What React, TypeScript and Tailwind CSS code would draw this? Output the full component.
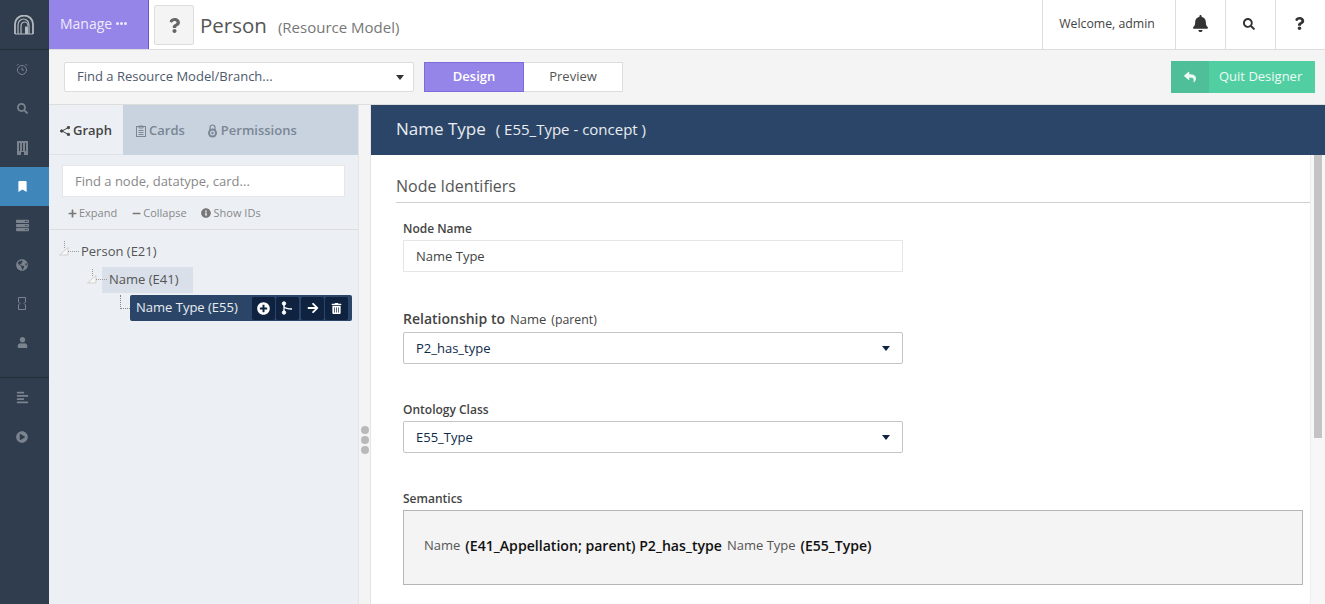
import {
  FaAlignLeft,
  FaArrowRight,
  FaBell,
  FaBookmark,
  FaGlobeAmericas,
  FaInfoCircle,
  FaMinus,
  FaPlayCircle,
  FaPlus,
  FaPlusCircle,
  FaQuestion,
  FaReply,
  FaSearch,
  FaServer,
  FaTrashAlt,
  FaUser,
} from "react-icons/fa";

function Logo() {
  return (
    <svg width="20" height="20" viewBox="0 0 20 20" fill="none" stroke="#b5b9be" strokeWidth="1.5">
      <path d="M1 19V9a9 8.500 0 0 1 18 0v10" strokeWidth="1.800" />
      <path d="M4 19V10a5.500 6 0 0 1 11 0v9" strokeWidth="1.200" />
      <path d="M7 19v-8a3.500 4 0 0 1 7 0" strokeWidth="1.200" />
      <path d="M1 19h18" strokeWidth="1" />
      <path d="M11 19v-7.500h3V19" fill="#b5b9be" stroke="none" />
    </svg>
  );
}

function ClockIcon() {
  return (
    <svg width="12" height="13" viewBox="0 0 12 13" fill="none" stroke="#7b838d" strokeWidth="1">
      <circle cx="6" cy="7" r="4.500" />
      <path d="M6 4.500V7h2M1 2.500 2.500 1M11 2.500 9.500 1" />
    </svg>
  );
}

function BuildingIcon() {
  return (
    <svg width="11" height="14" viewBox="0 0 11 14">
      <rect width="11" height="14" fill="#7b838d" />
      <path d="M2 2h1v8H2zM5 2h1v8H5zM8 2h1v8H8zM4 11h3v3H4z" fill="#2f3d4f" />
    </svg>
  );
}

function TicketIcon() {
  return (
    <svg width="8" height="13" viewBox="0 0 8 13" fill="none" stroke="#7b838d" strokeWidth="1">
      <path d="M.5.500h7V5L6 6.500 7.500 8v4.500h-7V8L2 6.500.5 5z" />
    </svg>
  );
}

function BranchIcon() {
  return (
    <svg width="13" height="14" viewBox="0 0 13 14" fill="none" stroke="white">
      <circle cx="3" cy="2.500" r="1.700" fill="white" />
      <circle cx="3" cy="11.500" r="1.700" fill="white" />
      <path d="M3 3v8M3 5.500c1 2 4 2.500 8 2.500" strokeWidth="1.300" />
    </svg>
  );
}

function ClipboardIcon() {
  return (
    <svg width="10" height="12" viewBox="0 0 10 12" fill="none" stroke="#7a8694" strokeWidth="1">
      <rect x=".5" y="1.500" width="9" height="10" />
      <path d="M3 1h4v2H3zM2.500 5.500h5M2.500 7.500h5M2.500 9.500h5" />
    </svg>
  );
}

function LockIcon() {
  return (
    <svg width="11" height="14" viewBox="0 0 11 14" fill="none" stroke="#7a8694">
      <path d="M3 6V3.500a2.500 2.500 0 0 1 5 0V6" strokeWidth="1.200" />
      <circle cx="5.500" cy="9" r="4.500" fill="#7a8694" stroke="none" />
      <circle cx="5.500" cy="9" r="2.500" fill="#c8d3df" stroke="none" />
      <circle cx="5.500" cy="9" r="1.200" fill="#7a8694" stroke="none" />
    </svg>
  );
}

function ShareIcon() {
  return (
    <svg width="10" height="10" viewBox="0 0 10 10" fill="none" stroke="#444" strokeWidth="1">
      <path d="M8.500 1.500 2 5l6.500 3.500" />
      <circle cx="8.500" cy="1.500" r="1.200" fill="#444" />
      <circle cx="1.700" cy="5" r="1.200" fill="#444" />
      <circle cx="8.500" cy="8.500" r="1.200" fill="#444" />
    </svg>
  );
}

function Caret() {
  return <span className="w-0 h-0 border-x-[4px] border-x-transparent border-t-[5px] border-t-[#0f2240]" />;
}

function TreeToggle() {
  return (
    <svg width="22" height="22" viewBox="0 0 22 22" className="shrink-0 relative z-10">
      <path d="M6.500 0v7" stroke="#9a9a9a" strokeDasharray="1 1" fill="none" />
      <path d="M1.500 14 10 6.500V14z" fill="#f7f7f7" stroke="#cfcfcf" strokeWidth="1" />
      <path d="M10 10.500h12" stroke="#9a9a9a" strokeDasharray="1 1" fill="none" />
    </svg>
  );
}

function NavItem({ children, active }: { children: React.ReactNode; active?: boolean }) {
  return (
    <div className={`h-[39px] pr-[5px] flex items-center justify-center ${active ? "bg-[#3f86bb] text-white" : "text-[#7b838d]"}`}>
      {children}
    </div>
  );
}

function SelectBox({ value }: { value: string }) {
  return (
    <div className="w-[500px] h-[32px] bg-white border border-[#c4c4c4] rounded-[2px] flex items-center justify-between pl-3 pr-[12px] text-[13px] text-[#0f2a4a]">
      <span className="pt-[1px]">{value}</span>
      <Caret />
    </div>
  );
}

function ActionButton({ children, className = "" }: { children: React.ReactNode; className?: string }) {
  return <div className={`w-[23px] h-[23px] rounded-[2px] bg-[#0f2240] flex items-center justify-center text-white ${className}`}>{children}</div>;
}

export default function App() {
  return (
    <div className="flex w-[1325px] h-[604px] overflow-hidden bg-[#f4f4f4] text-[#444] font-['Open_Sans',sans-serif]">
      <aside className="w-[49px] shrink-0 bg-[#2f3d4f] flex flex-col">
        <div className="h-[50px] shrink-0 pr-[1px] flex items-center justify-center border-b border-[#222d3a]">
          <Logo />
        </div>
        <div className="flex flex-col">
          <NavItem><ClockIcon /></NavItem>
          <NavItem><FaSearch size={11} /></NavItem>
          <NavItem><BuildingIcon /></NavItem>
          <NavItem active><FaBookmark size={11} /></NavItem>
          <NavItem><FaServer size={13} /></NavItem>
          <NavItem><FaGlobeAmericas size={12} /></NavItem>
          <NavItem><TicketIcon /></NavItem>
          <NavItem><FaUser size={11} /></NavItem>
        </div>
        <div className="mt-[15px] border-t border-[#222d3a] flex flex-col">
          <NavItem><FaAlignLeft size={13} /></NavItem>
          <NavItem><FaPlayCircle size={12} /></NavItem>
        </div>
      </aside>

      <div className="flex-1 min-w-0 flex flex-col">
        <header className="h-[50px] shrink-0 bg-white border-b border-[#ddd] flex items-stretch">
          <div className="w-[100px] bg-[#9685e8] border-r border-[#6a55cf] flex items-center pl-[11px] pb-[2px] text-[14px] text-[#eeeafc] gap-[4px]">
            Manage
            <span className="flex gap-[1px]">
              <span className="w-[3px] h-[3px] rounded-full bg-[#eeeafc]" />
              <span className="w-[3px] h-[3px] rounded-full bg-[#eeeafc]" />
              <span className="w-[3px] h-[3px] rounded-full bg-[#eeeafc]" />
            </span>
          </div>
          <div className="w-[40px] h-[40px] ml-[5px] my-[5px] bg-[#f4f4f4] border border-[#ddd] rounded-[2px] flex items-center justify-center text-[#666]">
            <FaQuestion size={15} />
          </div>
          <div className="ml-[6px] pt-[2px] flex items-center text-[20.500px] text-[#555]">
            Person
            <span className="ml-[11px] mt-[3px] text-[15px] text-[#777]">(Resource Model)</span>
          </div>
          <div className="ml-auto flex items-stretch">
            <div className="w-[133px] pr-[4px] border-l border-[#ddd] flex items-center justify-center text-[12.300px] text-[#444]">Welcome, admin</div>
            <div className="w-[50px] pb-[2px] border-l border-[#ddd] flex items-center justify-center text-[#333]"><FaBell size={17} /></div>
            <div className="w-[50px] pr-[4px] pb-[2px] border-l border-[#ddd] flex items-center justify-center text-[#333]"><FaSearch size={12} /></div>
            <div className="w-[50px] pr-[3px] pb-[2px] border-l border-[#ddd] flex items-center justify-center text-[#333]"><FaQuestion size={13} /></div>
          </div>
        </header>

        <div className="h-[55px] shrink-0 flex items-center pl-[15px] pr-[10px] border-b border-[#ddd]">
          <div className="w-[350px] h-[30px] bg-white border border-[#ddd] rounded-[2px] flex items-center justify-between pl-3 pr-[9px] text-[13px] text-[#4d5a6d]">
            <span>Find a Resource Model/Branch...</span>
            <span className="w-0 h-0 border-x-[4px] border-x-transparent border-t-[5px] border-t-[#333]" />
          </div>
          <div className="ml-[10px] w-[100px] h-[30px] bg-[#9685e8] border border-[#7e6bdc] flex items-center justify-center text-[13px] font-semibold text-white">Design</div>
          <div className="w-[99px] h-[30px] bg-white border border-l-0 border-[#ddd] flex items-center justify-center text-[13px] text-[#555]">Preview</div>
          <div className="ml-auto h-[32px] w-[144px] bg-[#52cea3] flex items-stretch text-[13px] text-white/90">
            <div className="w-[38px] bg-[#4ebf98] flex items-center justify-center"><FaReply size={12} /></div>
            <div className="flex-1 flex items-center pl-[10px]">Quit Designer</div>
          </div>
        </div>

        <div className="flex-1 min-h-0 flex">
          <div className="w-[309px] shrink-0 bg-[#ecf0f5] flex flex-col">
            <div className="h-[50px] pt-[1px] flex bg-[#c8d3df] text-[13px] font-semibold text-[#7a8694]">
              <div className="w-[74px] -mt-[1px] pt-[2px] bg-[#ecf0f5] border-b border-[#dde2e8] flex items-center justify-center gap-[3px] text-[#444]">
                <ShareIcon />Graph
              </div>
              <div className="ml-[13px] flex items-center gap-[3px]"><ClipboardIcon />Cards</div>
              <div className="ml-[22px] flex items-center gap-[3px]"><LockIcon />Permissions</div>
            </div>
            <div className="h-[75px] border-b border-[#ddd] px-[13px] pt-[10px]">
              <div className="w-[283px] h-[32px] pt-[1px] bg-white border border-[#e6e6e6] flex items-center pl-3 text-[13px] text-[#888]">
                Find a node, datatype, card...
              </div>
              <div className="mt-[8px] pl-[6px] flex items-center text-[11px] text-[#888]">
                <span className="flex items-center gap-[2px]"><FaPlus size={9} className="text-[#777]" />Expand</span>
                <span className="ml-[15px] flex items-center gap-[2px]"><FaMinus size={9} className="text-[#777]" />Collapse</span>
                <span className="ml-[14px] flex items-center gap-[3px]"><FaInfoCircle size={10} className="text-[#777]" />Show IDs</span>
              </div>
            </div>
            <div className="pl-[9px] pt-[8px] text-[13px] text-[#555]">
              <div className="h-[28px] flex items-center">
                <TreeToggle />
                <span className="ml-[1px]">Person (E21)</span>
              </div>
              <div className="h-[26px] flex items-center ml-[28px] mt-[1px]">
                <TreeToggle />
                <span className="-ml-[6px] w-[91px] pl-[7px] h-[26px] flex items-center bg-[#d9e0e9]">Name (E41)</span>
              </div>
              <div className="h-[26px] flex items-center ml-[62px] mt-[2px]">
                <span className="w-[10px] h-[14px] -mt-[13px] border-l border-b border-dotted border-[#888] shrink-0" />
                <div className="w-[222px] h-[26px] bg-[#2a4568] rounded-[2px] flex items-center pl-[6px] pr-[4px] text-white/90">
                  <span className="flex-1">Name Type (E55)</span>
                  <div className="flex gap-[1px]">
                    <ActionButton><FaPlusCircle size={13} /></ActionButton>
                    <ActionButton><BranchIcon /></ActionButton>
                    <ActionButton className="ml-[1px]"><FaArrowRight size={12} /></ActionButton>
                    <ActionButton><FaTrashAlt size={11} /></ActionButton>
                  </div>
                </div>
              </div>
            </div>
          </div>

          <div className="w-[13px] shrink-0 bg-[#f4f4f4] border-l border-r border-[#e4e4e4] flex flex-col items-center pt-[321px] gap-[2px]">
            <span className="w-[8px] h-[8px] rounded-full bg-[#b9b9b9]" />
            <span className="w-[8px] h-[8px] rounded-full bg-[#b9b9b9]" />
            <span className="w-[8px] h-[8px] rounded-full bg-[#b9b9b9]" />
          </div>

          <div className="flex-1 min-w-0 flex flex-col bg-white">
            <div className="h-[50px] shrink-0 bg-[#2a4568] flex items-center pl-[25px] pb-[2px] text-white/90">
              <span className="text-[17px]">Name Type</span>
              <span className="ml-[10px] text-[15px]">( E55_Type - concept )</span>
            </div>
            <div className="flex-1 min-h-0 flex">
              <div className="flex-1 min-w-0 pt-[20px] pl-[25px]">
                <div className="h-[28px] border-b border-[#d0d0d0] text-[16px] text-[#555] leading-[22px]">Node Identifiers</div>
                <div className="pl-[7px]">
                  <div className="mt-[18px] text-[12px] leading-[16px] font-semibold text-[#444]">Node Name</div>
                  <div className="mt-[3px] w-[500px] h-[32px] pt-[1px] bg-white border border-[#e6e6e6] flex items-center pl-3 text-[13px] text-[#444]">Name Type</div>
                  <div className="mt-[38px] leading-[18px] flex items-baseline text-[14px] font-semibold text-[#444]">
                    Relationship to
                    <span className="ml-[5px] text-[13px] font-normal">Name</span>
                    <span className="ml-[5px] text-[12.300px] font-normal">(parent)</span>
                  </div>
                  <div className="mt-[3px]"><SelectBox value="P2_has_type" /></div>
                  <div className="mt-[38px] text-[12px] leading-[16px] font-semibold text-[#444]">Ontology Class</div>
                  <div className="mt-[3px]"><SelectBox value="E55_Type" /></div>
                  <div className="mt-[38px] text-[12px] leading-[16px] font-semibold text-[#444]">Semantics</div>
                  <div className="mt-[3px] w-[900px] h-[75px] pb-[4px] bg-[#f4f4f4] border border-[#b5b5b5] flex items-center pl-5 text-[13px] text-[#555]">
                    Name
                    <span className="ml-[5px] text-[14.100px] font-semibold text-[#111]">(E41_Appellation; parent) P2_has_type</span>
                    <span className="ml-[5px]">Name Type</span>
                    <span className="ml-[5px] text-[14px] font-semibold text-[#111]">(E55_Type)</span>
                  </div>
                </div>
              </div>
              <div className="w-[15px] shrink-0 bg-[#f7f7f7] border-l border-[#eee] px-[3px]">
                <div className="h-[283px] bg-[#c4c4c4]" />
              </div>
            </div>
          </div>
        </div>
      </div>
    </div>
  );
}
